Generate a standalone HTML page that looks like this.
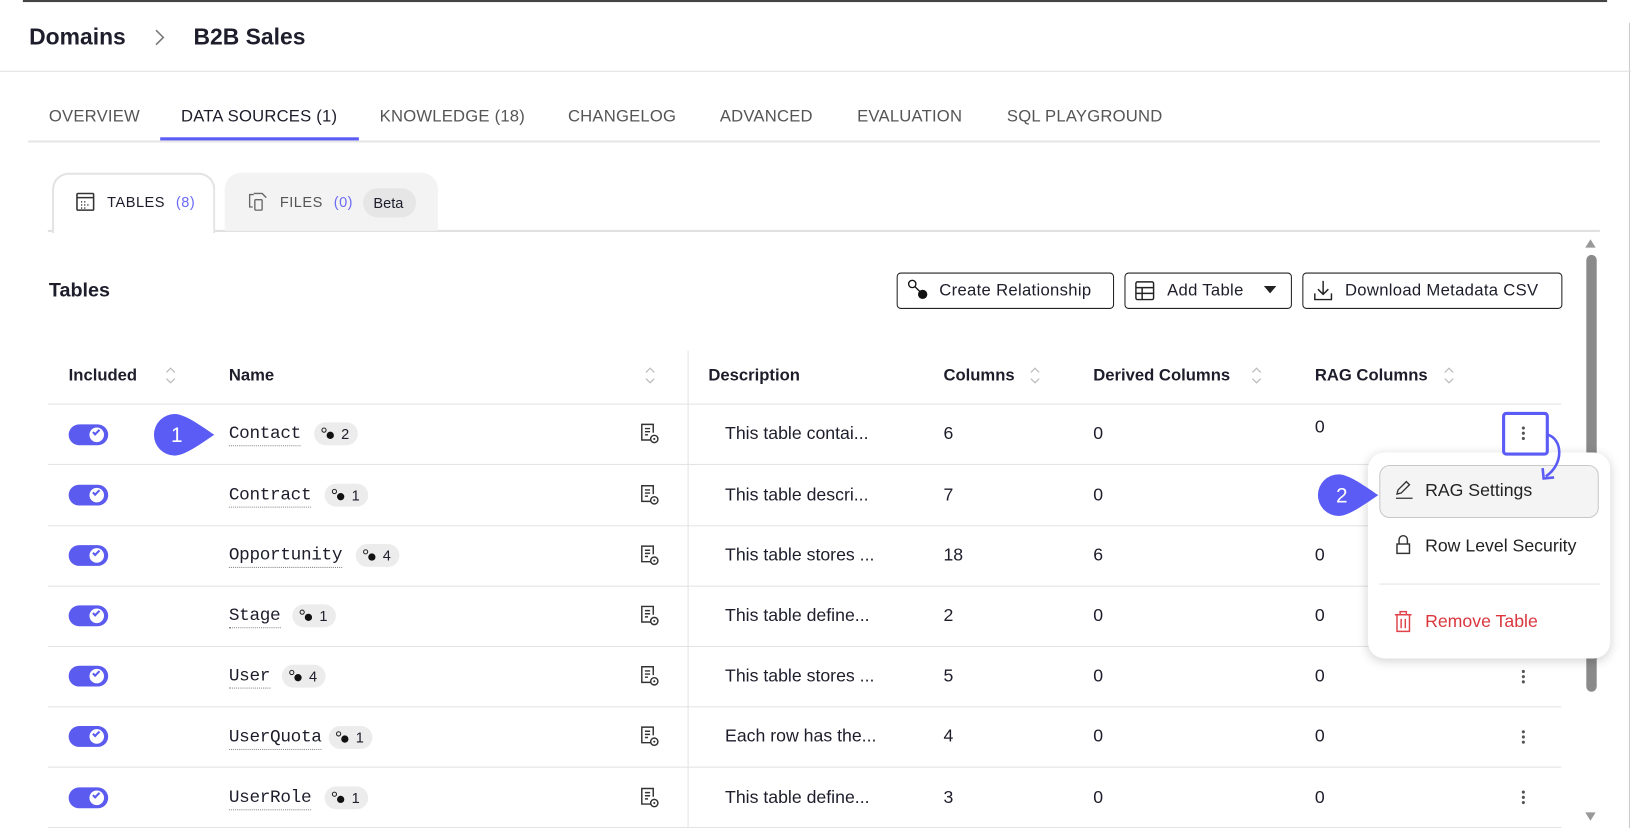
<!DOCTYPE html>
<html><head><meta charset="utf-8">
<style>
*{box-sizing:border-box;margin:0;padding:0}
html,body{width:1631px;height:828px;overflow:hidden;background:#fff}
#w{position:absolute;left:0;top:0;width:1568px;height:796px;transform:scale(1.0402);transform-origin:0 0;font-family:"Liberation Sans",sans-serif;color:#1d1d2b}
.a{position:absolute;white-space:nowrap}
.tab{position:absolute;top:104px;font-size:16px;color:#555;letter-spacing:.2px}
.th{position:absolute;top:353px;font-size:16px;font-weight:bold;color:#1d1d2b}
.sort{position:absolute;width:10px;height:18px}
.hl{position:absolute;left:46px;width:1455px;height:1px;background:#e3e3e3}
.tog{position:absolute;left:66px;width:38px;height:20px;border-radius:10px;background:#5b5bf0}
.tog::after{content:"";position:absolute;right:4px;top:3px;width:14px;height:14px;border-radius:50%;background:#fff}
.tog span{position:absolute;right:8px;top:5px;width:7px;height:4px;border-left:2px solid #5b5bf0;border-bottom:2px solid #5b5bf0;transform:rotate(-45deg);z-index:2}
.nm{position:absolute;left:220px;font-family:"Liberation Mono",monospace;font-size:17px;border-bottom:1px dotted #888;line-height:20px;letter-spacing:-.3px}
.bd{position:absolute;height:22px;border-radius:11px;background:#ececec;font-size:14px;padding:3px 8px 0 26px}
.bd i{position:absolute;left:7px;top:5px;width:5px;height:5px;border:1px solid #222;border-radius:50%}
.bd b{position:absolute;left:12px;top:9px;width:7px;height:7px;background:#111;border-radius:50%}
.cell{position:absolute;font-size:17px}
.doc{position:absolute;left:615px}
.keb{position:absolute;left:1463px;width:3px}
.keb::before{content:"";position:absolute;left:0;top:0;width:3px;height:3px;border-radius:50%;background:#555;box-shadow:0 5px 0 #555,0 10px 0 #555}
.btn{position:absolute;top:262px;height:35px;border:1px solid #222;border-radius:4px;font-size:16px;padding:8px 0 0 40px;letter-spacing:.3px}
</style></head><body><div id="w">
<div class="a" style="left:22px;top:0;width:1523px;height:2px;background:#444"></div>
<div class="a" style="left:1566px;top:22px;width:1px;height:774px;background:#ccc"></div>
<div class="a" style="left:28px;top:23px;font-size:22px;font-weight:bold;color:#1d1d2b">Domains</div>
<svg class="a" style="left:147px;top:26px" width="12" height="20"><path d="M3 3l7 7-7 7" fill="none" stroke="#777" stroke-width="1.5"/></svg>
<div class="a" style="left:186px;top:23px;font-size:22px;font-weight:bold">B2B Sales</div>
<div class="a" style="left:0;top:68px;width:1568px;height:1px;background:#e0e0e0"></div>

<div class="tab" style="left:47px">OVERVIEW</div>
<div class="tab" style="left:174px;color:#1d1d2b">DATA SOURCES (1)</div>
<div class="tab" style="left:365px">KNOWLEDGE (18)</div>
<div class="tab" style="left:546px">CHANGELOG</div>
<div class="tab" style="left:692px">ADVANCED</div>
<div class="tab" style="left:824px">EVALUATION</div>
<div class="tab" style="left:968px">SQL PLAYGROUND</div>
<div class="a" style="left:27px;top:135px;width:1511px;height:2px;background:#e6e6e6"></div>
<div class="a" style="left:154px;top:132px;width:191px;height:3px;background:#5b5bf5"></div>

<div class="a" style="left:46px;top:221px;width:1492px;height:2px;background:#e0e0e0"></div>
<div class="a" style="left:216px;top:166px;width:205px;height:56px;background:#f3f3f3;border-radius:16px 16px 0 0"></div>
<div class="a" style="left:50px;top:166px;width:157px;height:58px;background:#fff;border:2px solid #e3e3e3;border-bottom:none;border-radius:16px 16px 0 0"></div>
<svg class="a" style="left:73px;top:185px" width="18" height="18"><rect x="1" y="1" width="16" height="16" rx="1" fill="none" stroke="#333" stroke-width="1.5"/><path d="M1 5h16" stroke="#333" stroke-width="1.5"/><path d="M5 9h1M8 9h1M5 12h1M8 12h1M11 12h1M5 15h1M8 15h1" stroke="#333" stroke-width="1.5"/></svg>
<div class="a" style="left:103px;top:186px;font-size:14px;letter-spacing:.5px">TABLES <span style="color:#6b6bf5;margin-left:6px">(8)</span></div>
<svg class="a" style="left:238px;top:184px" width="20" height="20"><path d="M6 3H2v12h3" fill="none" stroke="#666" stroke-width="1.3"/><path d="M6 2h8l4 4v0" fill="none" stroke="#666" stroke-width="1.3"/><rect x="7" y="8" width="7" height="10" rx="1" fill="none" stroke="#666" stroke-width="1.3"/></svg>
<div class="a" style="left:269px;top:186px;font-size:14px;letter-spacing:.5px;color:#555">FILES <span style="color:#6b6bf5;margin-left:6px">(0)</span></div>
<div class="a" style="left:349px;top:181px;width:51px;height:28px;border-radius:14px;background:#e6e6e6;font-size:14px;padding:6px 0 0 10px">Beta</div>

<div class="a" style="left:47px;top:269px;font-size:19px;font-weight:bold">Tables</div>
<div class="btn" style="left:862px;width:209px">Create Relationship</div>
<svg class="a" style="left:872px;top:268px" width="22" height="22"><circle cx="5" cy="5" r="3.5" fill="none" stroke="#111" stroke-width="1.3"/><path d="M7.5 7.5l5 5" stroke="#111" stroke-width="1.3"/><circle cx="15" cy="15" r="4.5" fill="#111"/></svg>
<div class="btn" style="left:1081px;width:161px">Add Table</div>
<svg class="a" style="left:1091px;top:270px" width="19" height="19"><rect x="1" y="1" width="17" height="17" rx="1.5" fill="none" stroke="#222" stroke-width="1.4"/><path d="M1 6.5h17M1 12h17M7 6.5v11.5" stroke="#222" stroke-width="1.4"/></svg>
<svg class="a" style="left:1215px;top:275px" width="12" height="8"><path d="M0 0h12L6 7z" fill="#222"/></svg>
<div class="btn" style="left:1252px;width:250px">Download Metadata CSV</div>
<svg class="a" style="left:1262px;top:268px" width="20" height="22"><path d="M10 2v13M5 10l5 5 5-5M2 14v6h16v-6" fill="none" stroke="#222" stroke-width="1.4"/></svg>

<div class="a" style="left:661px;top:337px;width:1px;height:459px;background:#e3e3e3"></div>
<div class="th" style="left:66px">Included</div>
<div class="th" style="left:220px">Name</div>
<div class="th" style="left:681px">Description</div>
<div class="th" style="left:907px">Columns</div>
<div class="th" style="left:1051px">Derived Columns</div>
<div class="th" style="left:1264px">RAG Columns</div>
<svg class="sort" style="left:159px;top:352px"><path d="M1 6l4-4 4 4M1 12l4 4 4-4" fill="none" stroke="#bbb" stroke-width="1.2"/></svg>
<svg class="sort" style="left:620px;top:352px"><path d="M1 6l4-4 4 4M1 12l4 4 4-4" fill="none" stroke="#bbb" stroke-width="1.2"/></svg>
<svg class="sort" style="left:990px;top:352px"><path d="M1 6l4-4 4 4M1 12l4 4 4-4" fill="none" stroke="#bbb" stroke-width="1.2"/></svg>
<svg class="sort" style="left:1203px;top:352px"><path d="M1 6l4-4 4 4M1 12l4 4 4-4" fill="none" stroke="#bbb" stroke-width="1.2"/></svg>
<svg class="sort" style="left:1388px;top:352px"><path d="M1 6l4-4 4 4M1 12l4 4 4-4" fill="none" stroke="#bbb" stroke-width="1.2"/></svg>
<div class="hl" style="top:388px"></div>

<div class="hl" style="top:446px"></div><div class="hl" style="top:505px"></div><div class="hl" style="top:563px"></div><div class="hl" style="top:621px"></div><div class="hl" style="top:679px"></div><div class="hl" style="top:737px"></div><div class="hl" style="top:795px"></div>

<div class="tog" style="top:408px"><span></span></div>
<div class="tog" style="top:466px"><span></span></div>
<div class="tog" style="top:524px"><span></span></div>
<div class="tog" style="top:582px"><span></span></div>
<div class="tog" style="top:640px"><span></span></div>
<div class="tog" style="top:698px"><span></span></div>
<div class="tog" style="top:757px"><span></span></div>

<div class="nm" style="top:408px">Contact</div><div class="bd" style="left:302px;top:406px"><i></i><b></b>2</div>
<div class="nm" style="top:467px">Contract</div><div class="bd" style="left:312px;top:465px"><i></i><b></b>1</div>
<div class="nm" style="top:525px">Opportunity</div><div class="bd" style="left:342px;top:523px"><i></i><b></b>4</div>
<div class="nm" style="top:583px">Stage</div><div class="bd" style="left:281px;top:581px"><i></i><b></b>1</div>
<div class="nm" style="top:641px">User</div><div class="bd" style="left:271px;top:639px"><i></i><b></b>4</div>
<div class="nm" style="top:700px">UserQuota</div><div class="bd" style="left:316px;top:698px"><i></i><b></b>1</div>
<div class="nm" style="top:758px">UserRole</div><div class="bd" style="left:312px;top:756px"><i></i><b></b>1</div>

<svg width="0" height="0" style="position:absolute"><defs><g id="dc"><path d="M12 16H2V1h11v8" fill="none" stroke="#333" stroke-width="1.4"/><path d="M5 5h5M5 8h5M5 11h3" stroke="#333" stroke-width="1.4"/><circle cx="14" cy="15" r="3.5" fill="#fff" stroke="#333" stroke-width="1.4"/><circle cx="14" cy="15" r="1" fill="#333"/></g></defs></svg>
<svg class="doc" style="top:407px" width="20" height="20"><use href="#dc"/></svg>
<svg class="doc" style="top:466px" width="20" height="20"><use href="#dc"/></svg>
<svg class="doc" style="top:524px" width="20" height="20"><use href="#dc"/></svg>
<svg class="doc" style="top:582px" width="20" height="20"><use href="#dc"/></svg>
<svg class="doc" style="top:640px" width="20" height="20"><use href="#dc"/></svg>
<svg class="doc" style="top:698px" width="20" height="20"><use href="#dc"/></svg>
<svg class="doc" style="top:757px" width="20" height="20"><use href="#dc"/></svg>

<div class="cell" style="left:697px;top:407px">This table contai...</div><div class="cell" style="left:907px;top:407px">6</div><div class="cell" style="left:1051px;top:407px">0</div><div class="cell" style="left:1264px;top:401px">0</div>
<div class="cell" style="left:697px;top:466px">This table descri...</div><div class="cell" style="left:907px;top:466px">7</div><div class="cell" style="left:1051px;top:466px">0</div>
<div class="cell" style="left:697px;top:524px">This table stores ...</div><div class="cell" style="left:907px;top:524px">18</div><div class="cell" style="left:1051px;top:524px">6</div><div class="cell" style="left:1264px;top:524px">0</div>
<div class="cell" style="left:697px;top:582px">This table define...</div><div class="cell" style="left:907px;top:582px">2</div><div class="cell" style="left:1051px;top:582px">0</div><div class="cell" style="left:1264px;top:582px">0</div>
<div class="cell" style="left:697px;top:640px">This table stores ...</div><div class="cell" style="left:907px;top:640px">5</div><div class="cell" style="left:1051px;top:640px">0</div><div class="cell" style="left:1264px;top:640px">0</div>
<div class="cell" style="left:697px;top:698px">Each row has the...</div><div class="cell" style="left:907px;top:698px">4</div><div class="cell" style="left:1051px;top:698px">0</div><div class="cell" style="left:1264px;top:698px">0</div>
<div class="cell" style="left:697px;top:757px">This table define...</div><div class="cell" style="left:907px;top:757px">3</div><div class="cell" style="left:1051px;top:757px">0</div><div class="cell" style="left:1264px;top:757px">0</div>

<div class="keb" style="top:644px"></div>
<div class="keb" style="top:702px"></div>
<div class="keb" style="top:760px"></div>

<svg class="a" style="left:1523px;top:229px" width="12" height="10"><path d="M1 9l5-8 5 8z" fill="#999"/></svg>
<div class="a" style="left:1525px;top:245px;width:10px;height:420px;border-radius:5px;background:#8a8a8a"></div>
<svg class="a" style="left:1523px;top:780px" width="12" height="10"><path d="M1 1l5 8 5-8z" fill="#999"/></svg>

<!-- menu -->
<div class="a" style="left:1315px;top:435px;width:233px;height:198px;background:#fff;border-radius:16px;box-shadow:0 2px 10px rgba(0,0,0,.18)"></div>
<div class="a" style="left:1326px;top:447px;width:211px;height:51px;background:#f4f4f4;border:1px solid #c8c8c8;border-radius:10px"></div>
<svg class="a" style="left:1340px;top:461px" width="20" height="20"><path d="M3 14l1-4 8-8 3 3-8 8z" fill="none" stroke="#333" stroke-width="1.3"/><path d="M2 18h16" stroke="#333" stroke-width="1.3"/></svg>
<div class="a" style="left:1370px;top:462px;font-size:17px;color:#222">RAG Settings</div>
<svg class="a" style="left:1341px;top:514px" width="16" height="20"><path d="M4 9V5a4 4 0 0 1 8 0v4" fill="none" stroke="#333" stroke-width="1.4"/><rect x="2" y="9" width="12" height="9" fill="none" stroke="#333" stroke-width="1.4"/></svg>
<div class="a" style="left:1370px;top:515px;font-size:17px;color:#222">Row Level Security</div>
<div class="a" style="left:1326px;top:561px;width:212px;height:1px;background:#e3e3e3"></div>
<svg class="a" style="left:1340px;top:587px" width="18" height="21"><path d="M1 4h16M6 4V1h6v3M3 4v16h12V4M7 8v9M11 8v9" fill="none" stroke="#e0424a" stroke-width="1.4"/></svg>
<div class="a" style="left:1370px;top:588px;font-size:17px;color:#d9363e">Remove Table</div>

<!-- highlighted kebab (above menu) -->
<div class="a" style="left:1444px;top:396px;width:45px;height:42px;border:3px solid #5b5bf5;border-radius:4px;background:#fff"></div>
<div class="keb" style="top:410px"></div>

<svg class="a" style="left:1480px;top:410px" width="30" height="56"><path d="M8 8C22 12 24 36 6 48" fill="none" stroke="#5b5bf5" stroke-width="2.5"/><path d="M3 40l1 10 10-1" fill="none" stroke="#5b5bf5" stroke-width="2.5"/></svg>

<svg class="a" style="left:146px;top:396px" width="62" height="44"><path d="M22 2C32 2 48 14 60 22C48 30 32 42 22 42A20 20 0 0 1 22 2z" fill="#5b5bf5"/><text x="24" y="29" font-family="Liberation Sans" font-size="20" fill="#fff" text-anchor="middle">1</text></svg>
<svg class="a" style="left:1265px;top:454px" width="62" height="44"><path d="M22 2C32 2 48 14 60 22C48 30 32 42 22 42A20 20 0 0 1 22 2z" fill="#5b5bf5"/><text x="25" y="29" font-family="Liberation Sans" font-size="20" fill="#fff" text-anchor="middle">2</text></svg>
</div></body></html>
